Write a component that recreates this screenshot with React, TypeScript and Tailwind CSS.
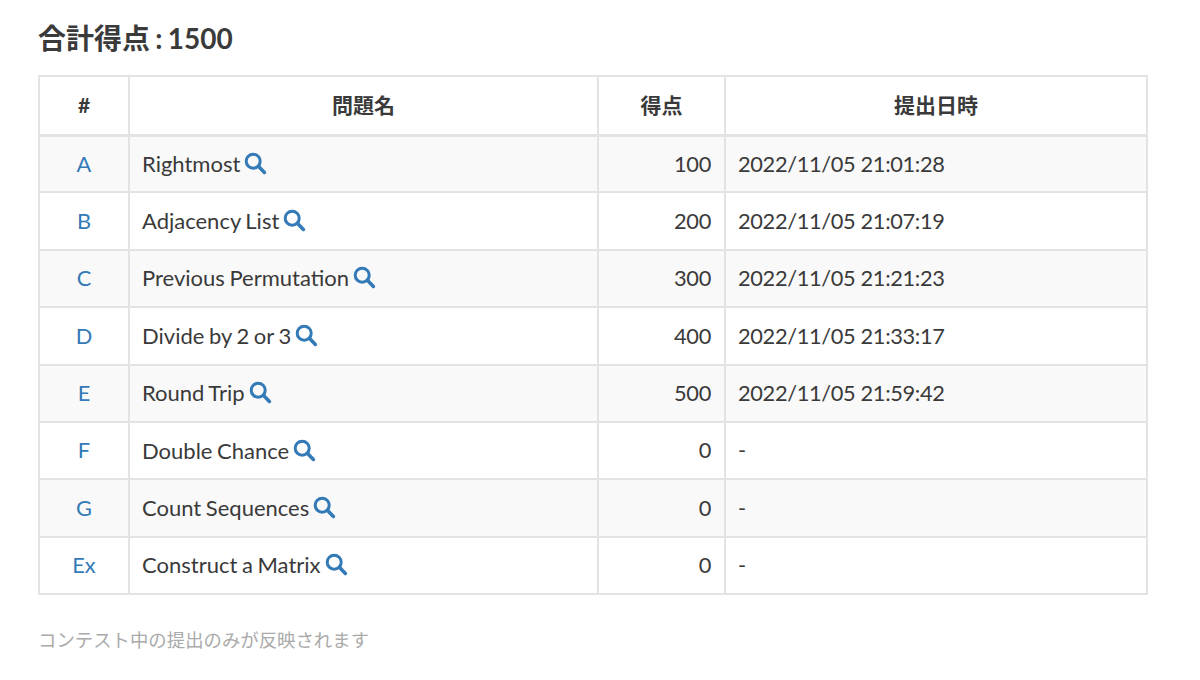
const rows = [
  { id: "A", name: "Rightmost", score: 100, time: "2022/11/05 21:01:28" },
  { id: "B", name: "Adjacency List", score: 200, time: "2022/11/05 21:07:19" },
  { id: "C", name: "Previous Permutation", score: 300, time: "2022/11/05 21:21:23" },
  { id: "D", name: "Divide by 2 or 3", score: 400, time: "2022/11/05 21:33:17" },
  { id: "E", name: "Round Trip", score: 500, time: "2022/11/05 21:59:42" },
  { id: "F", name: "Double Chance", score: 0, time: "-" },
  { id: "G", name: "Count Sequences", score: 0, time: "-" },
  { id: "Ex", name: "Construct a Matrix", score: 0, time: "-" },
];

function SearchIcon() {
  return (
    <svg width="23" height="23" viewBox="0 0 23 23" className="inline-block ml-[4px] -my-[6px] align-[3px]" aria-hidden>
      <circle cx="9.2" cy="9.2" r="7" fill="none" stroke="#337ab7" strokeWidth="3" />
      <path d="M14.6 14.6 L20.4 20.4" stroke="#337ab7" strokeWidth="3.6" strokeLinecap="round" />
    </svg>
  );
}

export default function App() {
  return (
    <div className="w-[1200px] h-[680px] overflow-hidden bg-white px-[38px] pt-[19px] text-[#3a3a3a] text-[21.8px] font-['Lato','Noto_Sans_CJK_JP',sans-serif]">
      <h2 className="text-[28px] leading-[38px] font-bold mb-[18px] [word-spacing:-1.5px]">合計得点 : 1500</h2>
      <table className="w-[1110px] table-fixed border-collapse">
        <thead>
          <tr className="h-[59px] font-bold text-[21px]">
            <th className="w-[90px] border-[2px] border-b-[3px] border-[#e3e3e3] text-center pb-[2px]">#</th>
            <th className="w-[469px] border-[2px] border-b-[3px] border-[#e3e3e3] text-center pb-[2px]">問題名</th>
            <th className="w-[127px] border-[2px] border-b-[3px] border-[#e3e3e3] text-center pb-[2px]">得点</th>
            <th className="border-[2px] border-b-[3px] border-[#e3e3e3] text-center pb-[2px]">提出日時</th>
          </tr>
        </thead>
        <tbody>
          {rows.map((r, i) => (
            <tr key={r.id} className={i % 2 === 0 ? "h-[57.4px] bg-[#f9f9f9]" : "h-[57.4px] bg-white"}>
              <td className="border-[2px] border-[#e3e3e3] text-center text-[#337ab7]">{r.id}</td>
              <td className="border-[2px] border-[#e3e3e3] px-[12px] pb-[1px] text-[22px] [word-spacing:-1px]">
                {r.name}
                <SearchIcon />
              </td>
              <td className="border-[2px] border-[#e3e3e3] px-[13px] text-right tracking-[-0.3px]">{r.score}</td>
              <td className="border-[2px] border-[#e3e3e3] px-[12px] tracking-[-0.35px]">{r.time}</td>
            </tr>
          ))}
        </tbody>
      </table>
      <p className="mt-[32px] text-[18.4px] leading-[26px] text-[#aaa]">コンテスト中の提出のみが反映されます</p>
    </div>
  );
}
